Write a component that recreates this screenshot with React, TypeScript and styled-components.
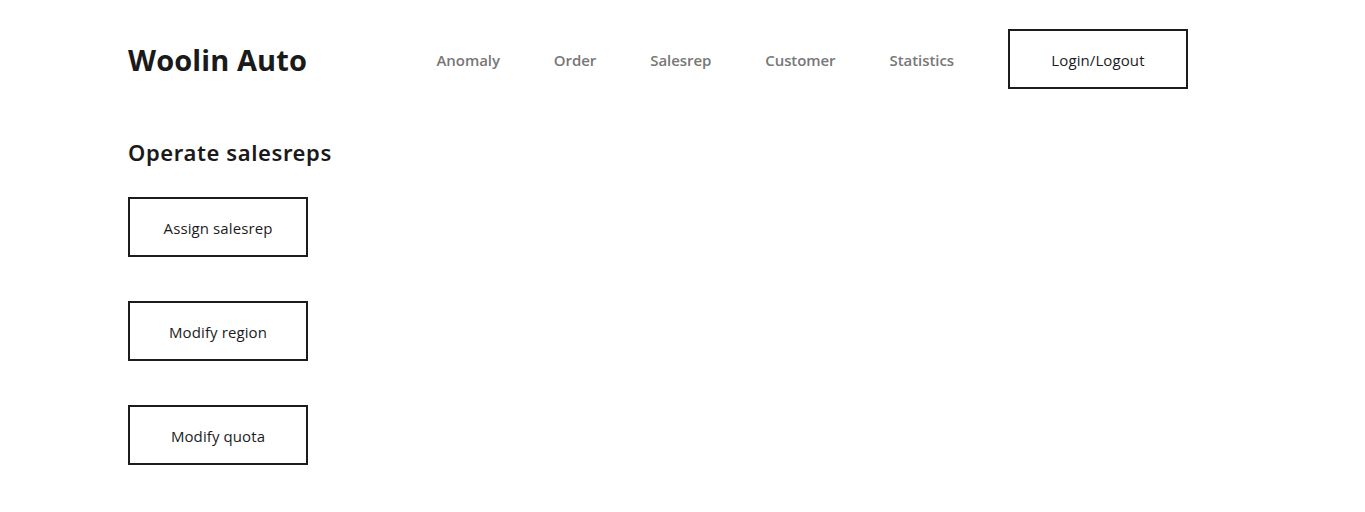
import React from "react";
import styled, { createGlobalStyle } from "styled-components";

const Global = createGlobalStyle`
  html, body { margin: 0; padding: 0; background: #fff; }
  body { font-family: "Open Sans", "Noto Sans", sans-serif; color: #1c1c1c; }
`;

const Page = styled.div`
  padding: 29px 0 0 128px;
  width: 1060px;
`;

const Header = styled.header`
  display: flex;
  align-items: center;
  height: 60px;
`;

const Logo = styled.div`
  font-family: "Open Sans", sans-serif;
  font-weight: 700;
  font-size: 29px;
  letter-spacing: 0.1px;
  color: #1a1a1a;
  width: 309px;
`;

const Nav = styled.nav`
  display: flex;
  align-items: center;
  gap: 54px;
`;

const NavLink = styled.a`
  font-size: 15px;
  font-weight: 600;
  letter-spacing: -0.07px;
  color: #777;
  text-decoration: none;
  padding-top: 2px;
`;

const Box = styled.button`
  width: 180px;
  height: 60px;
  border: 2px solid #1c1c1c;
  background: #fff;
  font-family: "Open Sans", sans-serif;
  font-size: 15px;
  font-weight: 500;
  letter-spacing: 0.1px;
  color: #1c1c1c;
  padding: 2px 0 0;
  cursor: pointer;
`;

const Main = styled.main`
  padding-top: 48px;
`;

const Heading = styled.h2`
  margin: 0 0 30px;
  font-family: "Noto Sans", sans-serif;
  font-weight: 600;
  font-size: 22px;
  letter-spacing: 0.6px;
  line-height: 30px;
  color: #1a1a1a;
`;

const Actions = styled.div`
  display: flex;
  flex-direction: column;
  gap: 44px;
`;

export default function App() {
  return (
    <>
      <Global />
      <Page>
        <Header>
          <Logo>Woolin Auto</Logo>
          <Nav>
            <NavLink>Anomaly</NavLink>
            <NavLink>Order</NavLink>
            <NavLink>Salesrep</NavLink>
            <NavLink>Customer</NavLink>
            <NavLink>Statistics</NavLink>
            <Box>Login/Logout</Box>
          </Nav>
        </Header>
        <Main>
          <Heading>Operate salesreps</Heading>
          <Actions>
            <Box>Assign salesrep</Box>
            <Box>Modify region</Box>
            <Box>Modify quota</Box>
          </Actions>
        </Main>
      </Page>
    </>
  );
}
